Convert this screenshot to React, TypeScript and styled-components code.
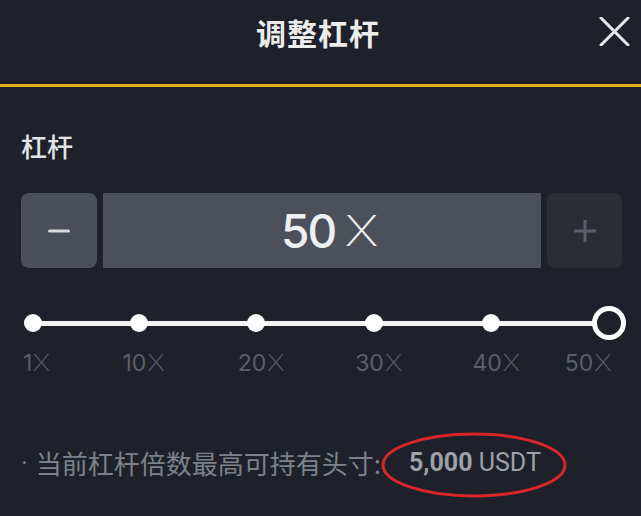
import styled, { createGlobalStyle } from "styled-components";

const GlobalStyle = createGlobalStyle`
  html, body {
    margin: 0;
    padding: 0;
    background: #1e2129;
  }
  * {
    box-sizing: border-box;
  }
`;

const Page = styled.div`
  width: 641px;
  height: 516px;
  background: #1e2129;
  font-family: "Noto Sans CJK SC", "Noto Sans", sans-serif;
  overflow: hidden;
`;

const Header = styled.div`
  display: grid;
  grid-template-columns: 1fr auto 1fr;
  align-items: center;
  height: 87px;
  border-bottom: 3px solid #e1b01f;
  padding-right: 11px;
`;

const Title = styled.div`
  grid-column: 2;
  font-size: 30px;
  font-weight: 700;
  color: #ececec;
  line-height: 1;
  margin: -20px 0 0 6px;
  letter-spacing: 1px;
`;

const CloseButton = styled.div`
  grid-column: 3;
  justify-self: end;
  display: flex;
  margin-top: -22px;
`;

const Body = styled.div`
  padding: 42px 19px 0 21px;
`;

const Label = styled.div`
  font-size: 26px;
  font-weight: 500;
  color: #e2e3e6;
  line-height: 34px;
`;

const Stepper = styled.div`
  display: grid;
  grid-template-columns: 76px 1fr 75px;
  column-gap: 6px;
  height: 75px;
  margin-top: 30px;
`;

const StepButton = styled.div<{ $disabled?: boolean }>`
  display: flex;
  align-items: center;
  justify-content: center;
  border-radius: 8px;
  background: ${(p) => (p.$disabled ? "#2a2d33" : "#4a4f5a")};
`;

const ValueBox = styled.div`
  display: flex;
  align-items: center;
  justify-content: center;
  gap: 13px;
  background: #4b505b;
  color: #eeeff1;
  font-family: Inter, Roboto, sans-serif;
  font-size: 46px;
  line-height: 1;
  padding-left: 12px;
`;

const Num = styled.span`
  font-weight: 500;
  letter-spacing: -2px;
`;

const Times = styled.span`
  display: inline-block;
  font-weight: 200;
  font-size: 42px;
  transform: scaleX(1.25);
`;

const Slider = styled.div`
  margin: 39px 13px 0 12px;
  position: relative;
  height: 80px;
`;

const Track = styled.div`
  position: absolute;
  left: 0;
  right: 0;
  top: 14px;
  height: 5px;
  background: #f4f4f4;
  border-radius: 3px;
`;

const Dot = styled.div`
  position: absolute;
  top: 7px;
  width: 18px;
  height: 18px;
  border-radius: 50%;
  background: #ffffff;
  transform: translateX(-50%);
`;

const Thumb = styled.div`
  position: absolute;
  top: -1px;
  width: 34px;
  height: 34px;
  border-radius: 50%;
  border: 5px solid #ffffff;
  background: #1e2129;
  transform: translateX(-50%);
`;

const Tick = styled.div<{ $align: "start" | "center" | "end" }>`
  position: absolute;
  top: 45px;
  font-family: Inter, Roboto, sans-serif;
  font-size: 23px;
  line-height: 1;
  color: #5a5f69;
  white-space: nowrap;
  transform: ${(p) =>
    p.$align === "start"
      ? "translateX(-10px)"
      : p.$align === "end"
      ? "translateX(calc(-100% + 1px))"
      : "translateX(calc(-50% + 4px))"};
  span {
    display: inline-block;
    font-weight: 200;
    transform: scaleX(1.2);
    margin-left: 2px;
  }
`;

const Note = styled.div`
  position: relative;
  display: flex;
  align-items: center;
  margin-top: 59px;
  font-size: 26px;
  line-height: 34px;
  color: #7c818b;
  white-space: nowrap;
`;

const Bullet = styled.span`
  font-family: Roboto, sans-serif;
  margin: 0 8px 0 0;
`;

const Amount = styled.span`
  font-family: Roboto, "Noto Sans", sans-serif;
  font-size: 25px;
  color: #9da1a9;
  margin-left: 28px;
  b {
    font-weight: 700;
  }
`;

const Circle = styled.svg`
  position: absolute;
  left: 353px;
  top: -17px;
  pointer-events: none;
`;

const stops = [1, 10, 20, 30, 40, 50];
const current = 50;

const pos = (v: number) => `${((v - 1) / 49) * 100}%`;

const App = () => {
  return (
    <Page>
      <GlobalStyle />
      <Header>
        <Title>调整杠杆</Title>
        <CloseButton>
          <svg width="31" height="29" viewBox="0 0 31 29">
            <path
              d="M2 1 L29 28 M29 1 L2 28"
              stroke="#e8e8e8"
              strokeWidth="3"
              strokeLinecap="round"
            />
          </svg>
        </CloseButton>
      </Header>
      <Body>
        <Label>杠杆</Label>
        <Stepper>
          <StepButton>
            <svg width="22" height="4" viewBox="0 0 22 4">
              <rect x="0" y="0.5" width="22" height="3" rx="1.5" fill="#d8d9dc" />
            </svg>
          </StepButton>
          <ValueBox>
            <Num>50</Num>
            <Times>X</Times>
          </ValueBox>
          <StepButton $disabled>
            <svg width="22" height="22" viewBox="0 0 22 22">
              <path d="M11 0 V22 M0 11 H22" stroke="#5a5f69" strokeWidth="3" />
            </svg>
          </StepButton>
        </Stepper>
        <Slider>
          <Track />
          {stops.map((s) =>
            s === current ? (
              <Thumb key={s} style={{ left: pos(s) }} />
            ) : (
              <Dot key={s} style={{ left: pos(s) }} />
            )
          )}
          {stops.map((s, i) => (
            <Tick
              key={"t" + s}
              $align={i === 0 ? "start" : i === stops.length - 1 ? "end" : "center"}
              style={{ left: pos(s) }}
            >
              {s}
              <span>X</span>
            </Tick>
          ))}
        </Slider>
        <Note>
          <Bullet>·</Bullet>
          当前杠杆倍数最高可持有头寸:
          <Amount>
            <b>5,000</b> USDT
          </Amount>
          <Circle width="200" height="72" viewBox="0 0 200 72">
            <ellipse
              cx="100"
              cy="36"
              rx="91"
              ry="31"
              fill="none"
              stroke="#d8262b"
              strokeWidth="3"
            />
          </Circle>
        </Note>
      </Body>
    </Page>
  );
};

export default App;
